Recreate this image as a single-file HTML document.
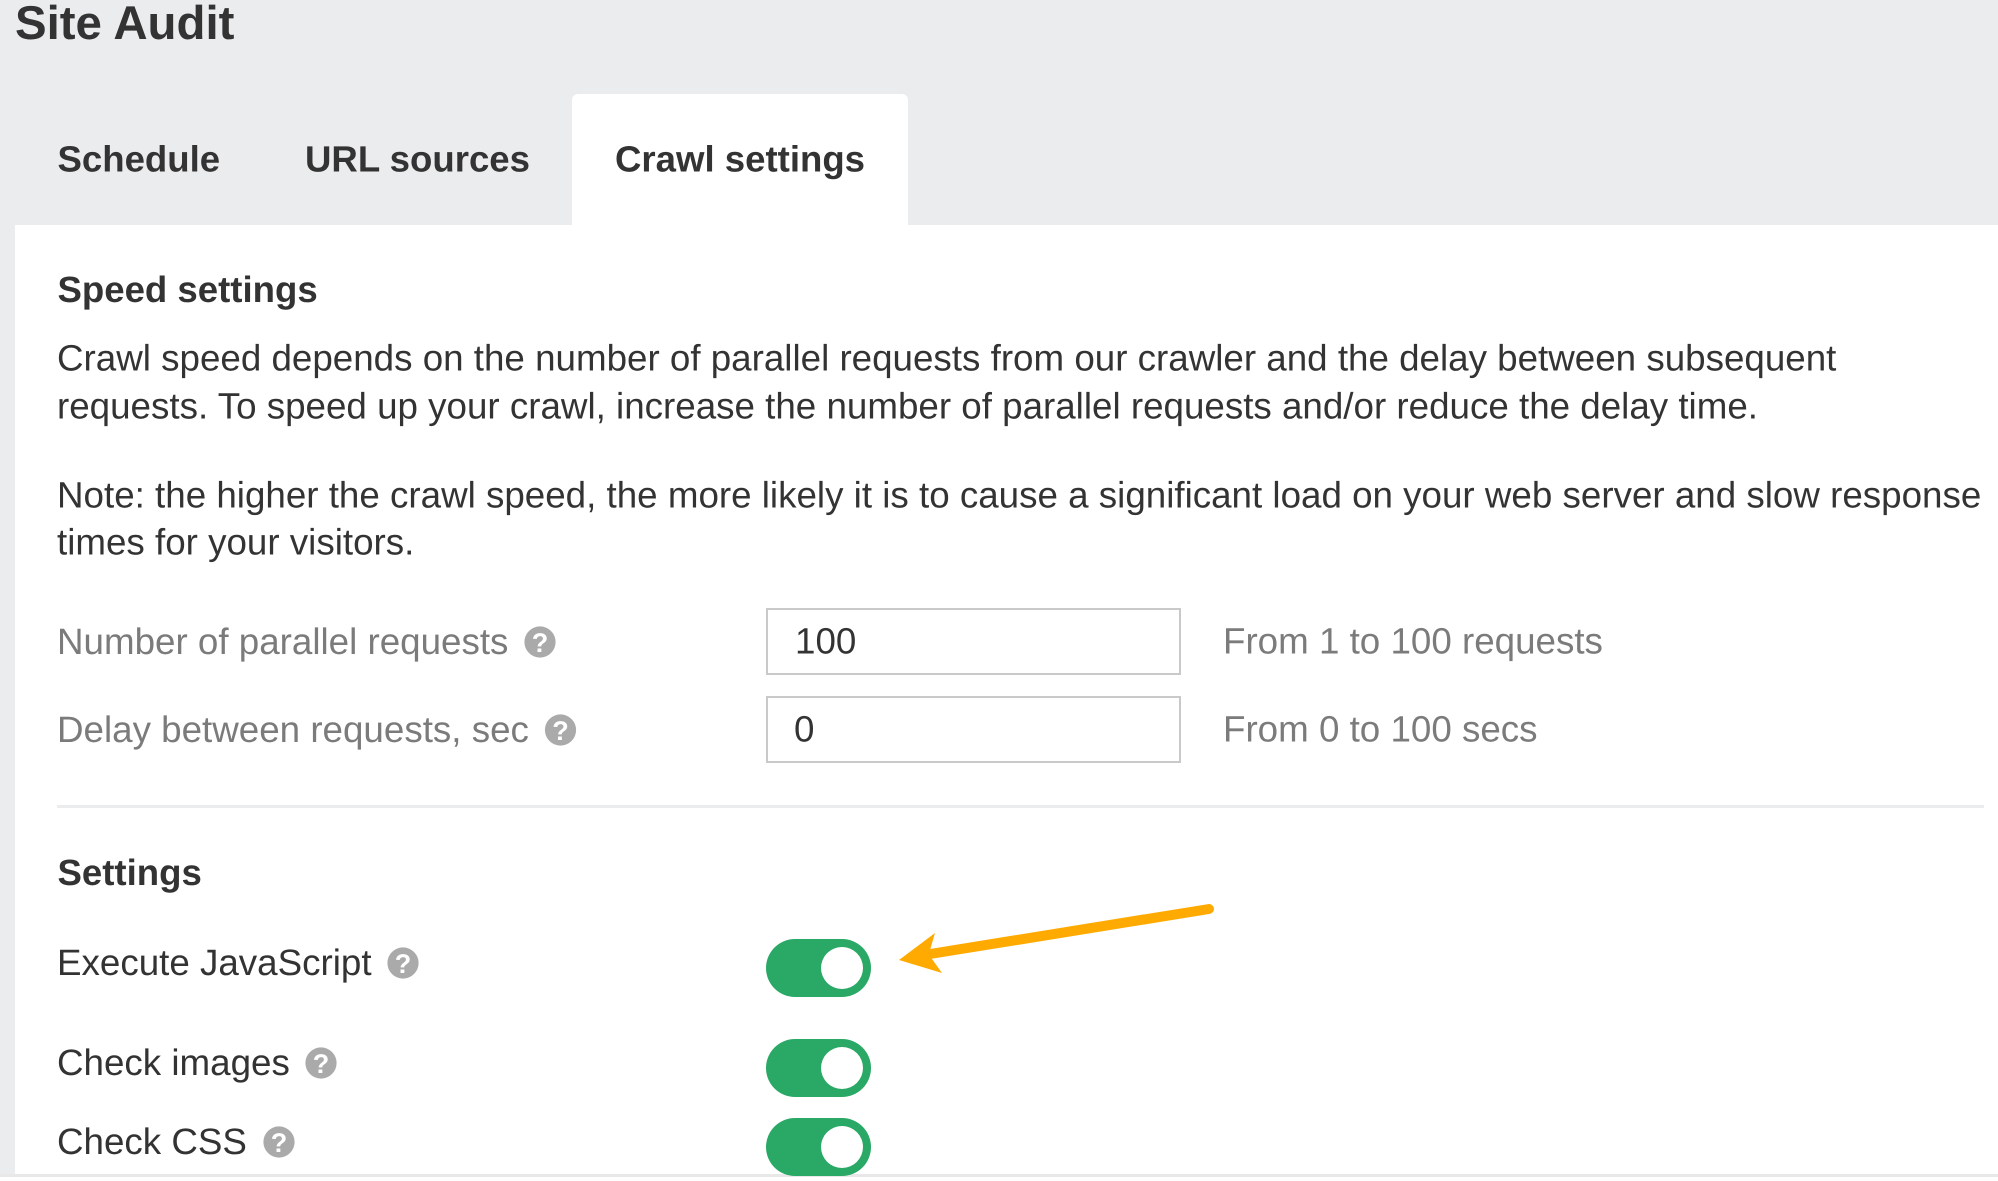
<!DOCTYPE html>
<html lang="en"><head><meta charset="utf-8"><title>Site Audit</title>
<style>
html,body{margin:0;padding:0;width:1998px;height:1181px;overflow:hidden;background:#fff}
svg{display:block}
text{font-family:"Liberation Sans",Arial,sans-serif;text-rendering:geometricPrecision}
.b{font-weight:700;fill:#333}
.t{font-size:36.76px;fill:#333}
.g{font-size:36.76px;fill:#7b7b7b}
.h{font-weight:700;font-size:27px;fill:#fff;text-anchor:middle}
</style></head><body>
<svg width="1998" height="1181" viewBox="0 0 1998 1181" xmlns="http://www.w3.org/2000/svg">
<rect x="0" y="0" width="1998" height="1177" fill="#ebecee"/>
<rect x="15" y="225" width="1983" height="949" fill="#fff"/>
<rect x="0" y="1174" width="1998" height="3" fill="#e8e8e8"/>
<path d="M572 225V100a6 6 0 0 1 6-6H902a6 6 0 0 1 6 6V225Z" fill="#fff"/>
<text class="b" x="15" y="39" font-size="47.4">Site Audit</text>
<text class="b" x="57.5" y="171.5" font-size="36.6">Schedule</text>
<text class="b" x="305" y="171.5" font-size="36.6">URL sources</text>
<text class="b" x="615" y="171.5" font-size="36.6">Crawl settings</text>
<text class="b" x="57.5" y="302" font-size="36.6">Speed settings</text>
<text class="t" x="57" y="370.5">Crawl speed depends on the number of parallel requests from our crawler and the delay between subsequent</text>
<text class="t" x="57" y="418.5">requests. To speed up your crawl, increase the number of parallel requests and/or reduce the delay time.</text>
<text class="t" x="57" y="507.5">Note: the higher the crawl speed, the more likely it is to cause a significant load on your web server and slow response</text>
<text class="t" x="57" y="554.5">times for your visitors.</text>
<text class="g" x="57" y="654">Number of parallel requests</text>
<circle cx="540" cy="642" r="15.6" fill="#aaa"/><text class="h" x="540" y="652">?</text>
<rect x="767" y="609" width="413" height="65" fill="#fff" stroke="#c9c9c9" stroke-width="2"/>
<text class="t" x="795" y="653.5">100</text>
<text class="g" x="1223" y="653.5">From 1 to 100 requests</text>
<text class="g" x="57" y="742">Delay between requests, sec</text>
<circle cx="560.5" cy="730" r="15.6" fill="#aaa"/><text class="h" x="560.5" y="740">?</text>
<rect x="767" y="697" width="413" height="65" fill="#fff" stroke="#c9c9c9" stroke-width="2"/>
<text class="t" x="794" y="741.5">0</text>
<text class="g" x="1223" y="741.5">From 0 to 100 secs</text>
<rect x="57" y="805" width="1927" height="3" fill="#ebecee"/>
<text class="b" x="57.5" y="885" font-size="36.6">Settings</text>
<text class="t" x="57" y="975">Execute JavaScript</text>
<circle cx="403" cy="963" r="15.6" fill="#aaa"/><text class="h" x="403" y="973">?</text>
<text class="t" x="57" y="1075">Check images</text>
<circle cx="321" cy="1063" r="15.6" fill="#aaa"/><text class="h" x="321" y="1073">?</text>
<text class="t" x="57" y="1154">Check CSS</text>
<circle cx="279" cy="1142" r="15.6" fill="#aaa"/><text class="h" x="279" y="1152">?</text>
<rect x="766" y="939" width="105" height="58" rx="29" fill="#2aa866"/><circle cx="842" cy="968" r="21" fill="#fff"/>
<rect x="766" y="1039" width="105" height="58" rx="29" fill="#2aa866"/><circle cx="842" cy="1068" r="21" fill="#fff"/>
<rect x="766" y="1118" width="105" height="58" rx="29" fill="#2aa866"/><circle cx="842" cy="1147" r="21" fill="#fff"/>
<path d="M1209 909L930 954" stroke="#ffaa00" stroke-width="10" stroke-linecap="round" fill="none"/>
<path d="M899 960L935 933L930 950L932 959L942 973Z" fill="#ffaa00"/>
</svg>
</body></html>
